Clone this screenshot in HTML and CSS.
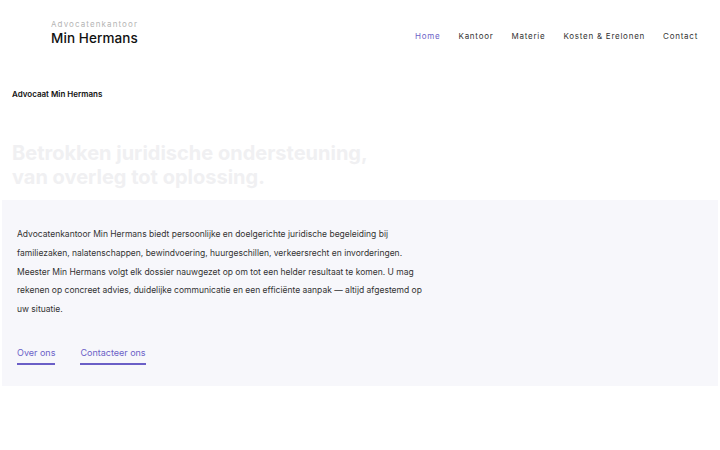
FILE: index.html
```html
<!DOCTYPE html>
<html lang="nl">
<head>
    <meta charset="UTF-8">
    <meta name="viewport" content="width=device-width, initial-scale=1.0">
    <title>Advocatenkantoor Min Hermans</title>
    <link rel="stylesheet" href="styles.css">
</head>
<body>
    <header class="header">
        <a class="brand" href="#">
            <span class="brand-sub">Advocatenkantoor</span>
            <span class="brand-name">Min Hermans</span>
        </a>
        <nav class="nav">
            <a href="#" class="active">Home</a>
            <a href="#">Kantoor</a>
            <a href="#">Materie</a>
            <a href="#">Kosten &amp; Erelonen</a>
            <a href="#">Contact</a>
        </nav>
    </header>

    <section class="hero">
        <div class="eyebrow">Advocaat Min Hermans</div>
        <h1 class="hero-title">Betrokken juridische ondersteuning,<br>van overleg tot oplossing.</h1>
    </section>

    <!-- Intro panel -->
    <section class="intro">
        <p class="intro-text">Advocatenkantoor Min Hermans biedt persoonlijke en doelgerichte juridische begeleiding bij familiezaken, nalatenschappen, bewindvoering, huurgeschillen, verkeersrecht en invorderingen. Meester Min Hermans volgt elk dossier nauwgezet op om tot een helder resultaat te komen. U mag rekenen op concreet advies, duidelijke communicatie en een efficiënte aanpak — altijd afgestemd op uw situatie.</p>
        <div class="links">
            <a href="#" class="link">Over ons</a>
            <a href="#" class="link">Contacteer ons</a>
        </div>
    </section>
</body>
</html>
```

FILE: styles.css
```css
* {
    margin: 0;
    padding: 0;
    box-sizing: border-box;
}

body {
    font-family: Inter, 'Noto Sans', sans-serif;
    background: #ffffff;
    color: #222;
}

a {
    text-decoration: none;
}

/* Header */
.header {
    display: flex;
    justify-content: space-between;
    align-items: flex-start;
    padding: 19px 22px 0 51px;
    height: 70px;
}

.brand {
    display: flex;
    flex-direction: column;
    color: #111;
}

.brand-sub {
    font-size: 8px;
    letter-spacing: 1.1px;
    color: #b5b5b5;
    line-height: 11px;
}

.brand-name {
    font-size: 13.5px;
    font-weight: 500;
    letter-spacing: 0.1px;
    line-height: 17px;
}

.nav {
    display: flex;
    gap: 18px;
    padding-top: 12px;
}

.nav a {
    font-size: 8px;
    letter-spacing: 0.75px;
    color: #333;
}

.nav a.active {
    color: #6b5fc7;
}

/* Hero */
.hero {
    padding: 19px 12px 11px;
}

.eyebrow {
    font-size: 8px;
    font-weight: 600;
    color: #111;
    margin-bottom: 42px;
}

.hero-title {
    font-size: 20px;
    font-weight: 700;
    line-height: 24px;
    color: #f0f0f2;
}

/* Intro panel */
.intro {
    margin: 0 2px;
    background: #f7f7fb;
    padding: 25px 15px 21px;
}

.intro-text {
    max-width: 408px;
    font-size: 8.5px;
    line-height: 18.8px;
    color: #333;
}

.links {
    display: flex;
    gap: 25px;
    margin-top: 28px;
}

.link {
    font-size: 9px;
    color: #6b5fc7;
    padding-bottom: 5px;
    border-bottom: 2px solid #6b5fc7;
}
```
